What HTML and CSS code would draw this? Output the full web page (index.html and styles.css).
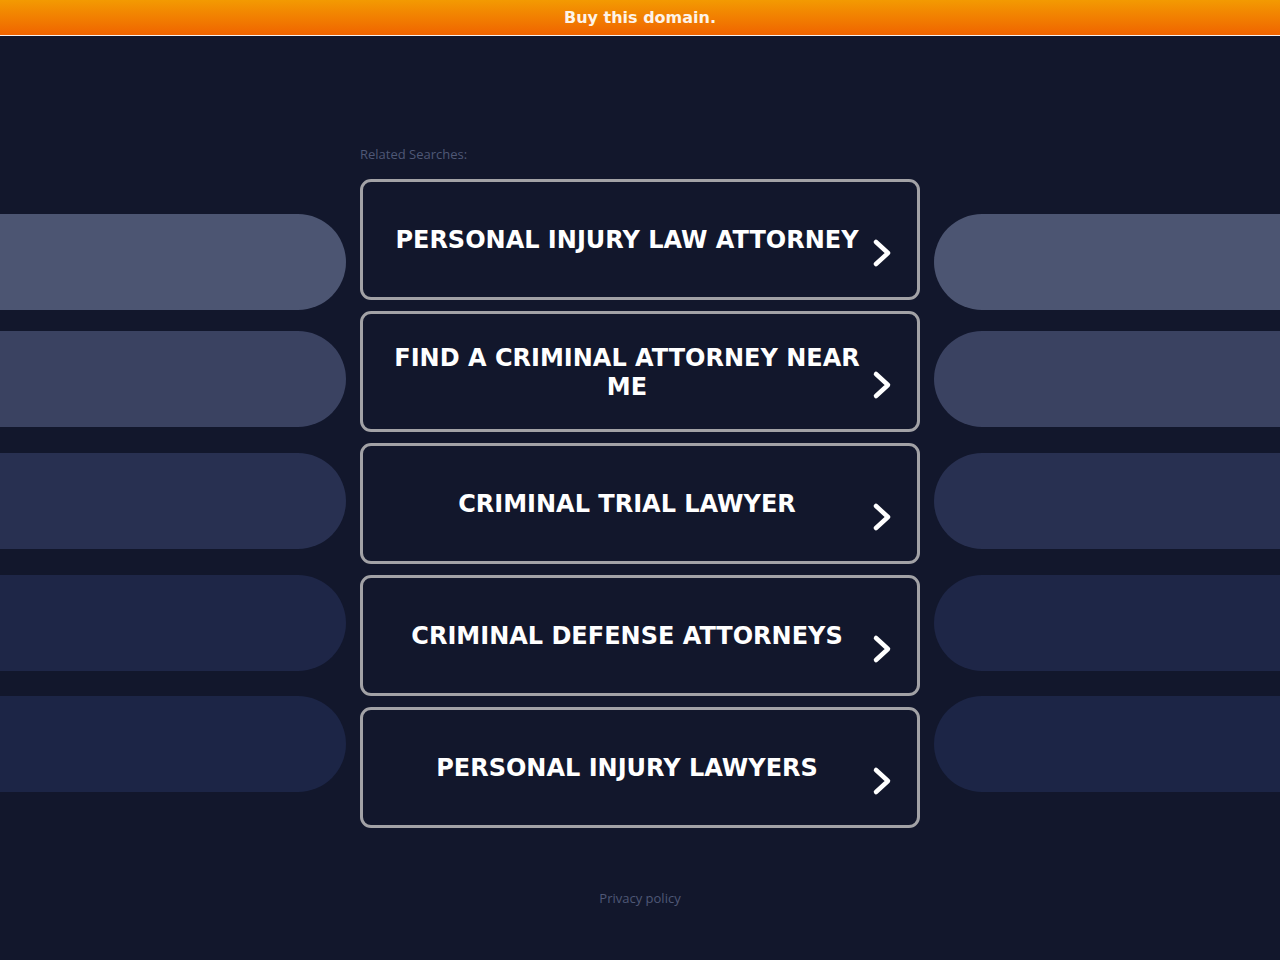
FILE: index.html
```html
<!DOCTYPE html>
<html lang="en">
<head>
<meta charset="utf-8">
<title>Related Searches</title>
<link rel="stylesheet" href="styles.css">
</head>
<body>
<div class="banner"><a class="banner-link" href="#">Buy this domain.</a></div>
<main class="main">
  <div class="side side-left">
    <div class="pill pill-1"></div>
    <div class="pill pill-2"></div>
    <div class="pill pill-3"></div>
    <div class="pill pill-4"></div>
    <div class="pill pill-5"></div>
  </div>
  <div class="center">
    <div class="label">Related Searches:</div>
    <div class="cards">
      <a class="card" href="#"><span class="card-text">PERSONAL INJURY LAW ATTORNEY</span><svg class="chev" viewBox="0 0 26 30" width="26" height="30"><polyline points="7,4 19,15 7,26" /></svg></a>
      <a class="card" href="#"><span class="card-text">FIND A CRIMINAL ATTORNEY NEAR ME</span><svg class="chev" viewBox="0 0 26 30" width="26" height="30"><polyline points="7,4 19,15 7,26" /></svg></a>
      <a class="card" href="#"><span class="card-text">CRIMINAL TRIAL LAWYER</span><svg class="chev" viewBox="0 0 26 30" width="26" height="30"><polyline points="7,4 19,15 7,26" /></svg></a>
      <a class="card" href="#"><span class="card-text">CRIMINAL DEFENSE ATTORNEYS</span><svg class="chev" viewBox="0 0 26 30" width="26" height="30"><polyline points="7,4 19,15 7,26" /></svg></a>
      <a class="card" href="#"><span class="card-text">PERSONAL INJURY LAWYERS</span><svg class="chev" viewBox="0 0 26 30" width="26" height="30"><polyline points="7,4 19,15 7,26" /></svg></a>
    </div>
    <div class="footer"><a class="privacy" href="#">Privacy policy</a></div>
  </div>
  <div class="side side-right">
    <div class="pill pill-1"></div>
    <div class="pill pill-2"></div>
    <div class="pill pill-3"></div>
    <div class="pill pill-4"></div>
    <div class="pill pill-5"></div>
  </div>
</main>
</body>
</html>
```
FILE: styles.css
```css
html, body {
  margin: 0;
  padding: 0;
}
body {
  background: #12172c;
  font-family: "DejaVu Sans", "Liberation Sans", sans-serif;
  min-height: 960px;
}
.banner {
  height: 35px;
  border-bottom: 1px solid #f4f0ee;
  background: linear-gradient(to bottom, #f39a02, #f06400);
  display: flex;
  align-items: center;
  justify-content: center;
}
.banner-link {
  color: #fdf3e8;
  text-decoration: none;
  font-weight: bold;
  font-size: 16px;
}
.main {
  display: flex;
  align-items: flex-start;
  padding-top: 110px;
}
.side {
  flex: 1;
  display: flex;
  flex-direction: column;
  padding-top: 68px;
}
.pill {
  height: 96px;
  margin-top: 26px;
}
.pill-1 { margin-top: 0; background: #4c5572; }
.pill-2 { margin-top: 21px; background: #3a4261; }
.pill-3 { background: #283051; }
.pill-4 { background: #1e2647; }
.pill-5 { margin-top: 25px; background: #1c2546; }
.side-left .pill { border-radius: 0 48px 48px 0; }
.side-right .pill { border-radius: 48px 0 0 48px; }
.center {
  width: 560px;
  margin: 0 14px;
}
.label {
  font-family: "Open Sans", "Noto Sans", sans-serif;
  font-size: 13px;
  line-height: 16px;
  color: #4f5876;
  margin-bottom: 17px;
}
.cards {
  display: flex;
  flex-direction: column;
  gap: 11px;
}
.card {
  box-sizing: border-box;
  height: 121px;
  border: 3px solid #a2a2a6;
  border-radius: 11px;
  display: flex;
  align-items: center;
  padding: 0 22px;
  text-decoration: none;
  color: #ffffff;
}
.card-text {
  flex: 1;
  text-align: center;
  font-weight: bold;
  font-size: 24px;
  line-height: 29px;
  padding-top: 2px;
}
.chev {
  flex: none;
  margin-top: 26px;
  fill: none;
  stroke: #ffffff;
  stroke-width: 4.5;
  stroke-linecap: round;
  stroke-linejoin: round;
}
.footer {
  text-align: center;
  margin-top: 60px;
}
.privacy {
  font-family: "Open Sans", "Noto Sans", sans-serif;
  font-size: 13px;
  line-height: 18px;
  color: #4f5876;
  text-decoration: none;
}
```
